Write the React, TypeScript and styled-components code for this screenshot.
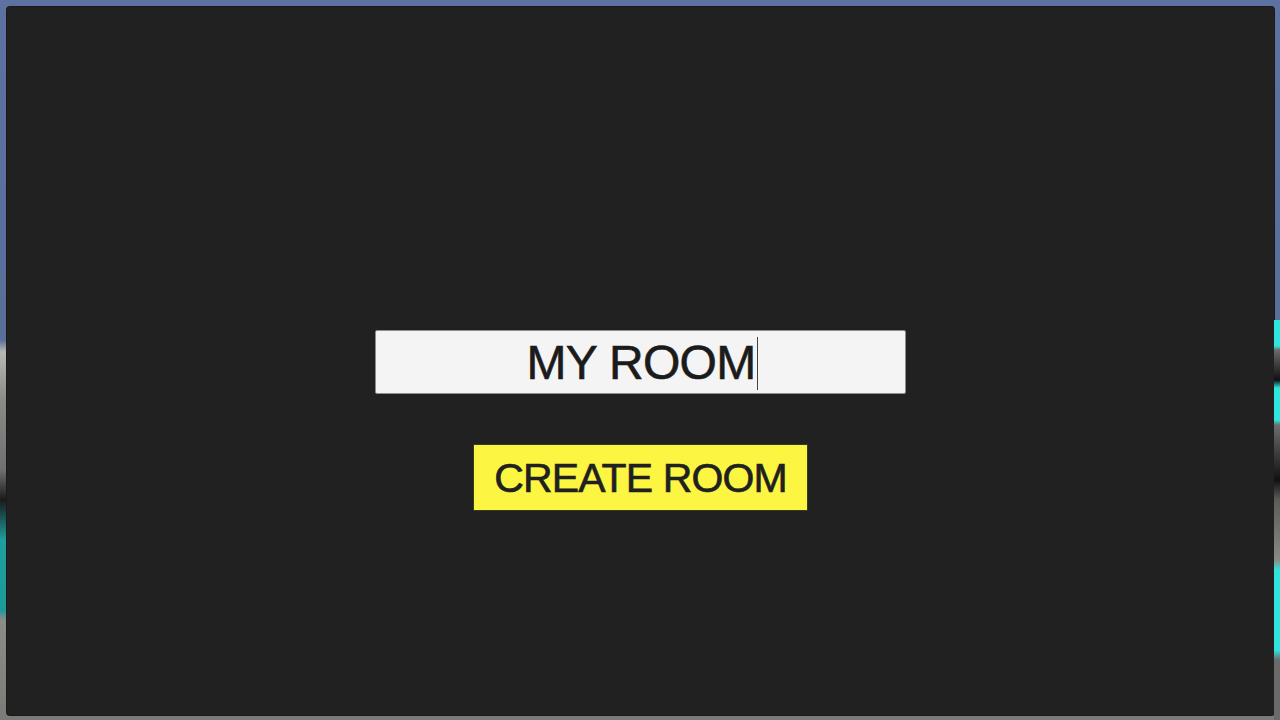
import React from 'react'
import styled, { createGlobalStyle } from 'styled-components'

const GlobalStyle = createGlobalStyle`
  html, body {
    margin: 0;
    padding: 0;
    width: 1280px;
    height: 720px;
    overflow: hidden;
    background: #5b6f98;
  }
  * {
    box-sizing: border-box;
  }
`

// the game scene that peeks around the overlay panel
const Backdrop = styled.div`
  width: 1280px;
  height: 720px;
  padding: 7px 6px 5px 7px;
  display: flex;
  background:
    linear-gradient(
      to bottom,
      #5d72a0 0px,
      #5a6e9a 340px,
      #b9b9b2 352px,
      #8a8a86 400px,
      #707070 470px,
      #1a1a1a 500px,
      #1f9e9e 540px,
      #1a9a9a 610px,
      #8c8c88 620px,
      #7a7a78 720px
    );
`

const RightEdge = styled.div`
  position: absolute;
  top: 320px;
  right: 0;
  width: 6px;
  height: 400px;
  background: linear-gradient(
    to bottom,
    #2fe6de 0px,
    #2fe6de 26px,
    #6a6a6a 30px,
    #101010 60px,
    #2fe6de 68px,
    #2fe6de 100px,
    #6d6d6d 105px,
    #111 160px,
    #5c5c58 180px,
    #8a8a84 240px,
    #30e4dc 250px,
    #30e4dc 330px,
    #6a6a6a 340px,
    #6a6a6a 400px
  );
`

const Scene = styled.div`
  position: relative;
  width: 1280px;
  height: 720px;
`

const Panel = styled.main`
  flex: 1;
  background: #212121;
  border-radius: 3px;
  box-shadow: 0 0 0 1px #1a1a1a;
  display: flex;
  flex-direction: column;
  align-items: center;
  padding-top: 323px;
  gap: 50px;
`

const Field = styled.div`
  width: 531px;
  height: 64px;
  background: #f4f4f4;
  border: 1px solid #8d8d8d;
  border-radius: 2px;
  display: flex;
  align-items: center;
  justify-content: center;
  padding: 2px 0 0 4px;
`

const FieldText = styled.span`
  font-family: 'Liberation Sans', Arial, sans-serif;
  font-size: 48px;
  letter-spacing: -0.7px;
  color: #1b1b1b;
  -webkit-text-stroke: 0.6px #1b1b1b;
  line-height: 1;
`

const Caret = styled.span`
  display: inline-block;
  width: 1px;
  height: 53px;
  margin-left: 2px;
  background: #444;
`

const CreateButton = styled.button`
  width: 335px;
  height: 67px;
  background: #fcf542;
  border: 1px solid #3a3a20;
  border-radius: 0;
  padding: 2px 0 0 0;
  font-family: 'Liberation Sans', Arial, sans-serif;
  font-size: 41px;
  letter-spacing: -0.9px;
  color: #202020;
  -webkit-text-stroke: 0.6px #202020;
  line-height: 1;
  cursor: pointer;
`

export default function App() {
  return (
    <>
      <GlobalStyle />
      <Scene>
        <Backdrop>
          <Panel>
            <Field>
              <FieldText>MY ROOM</FieldText>
              <Caret />
            </Field>
            <CreateButton>CREATE ROOM</CreateButton>
          </Panel>
        </Backdrop>
        <RightEdge />
      </Scene>
    </>
  )
}
